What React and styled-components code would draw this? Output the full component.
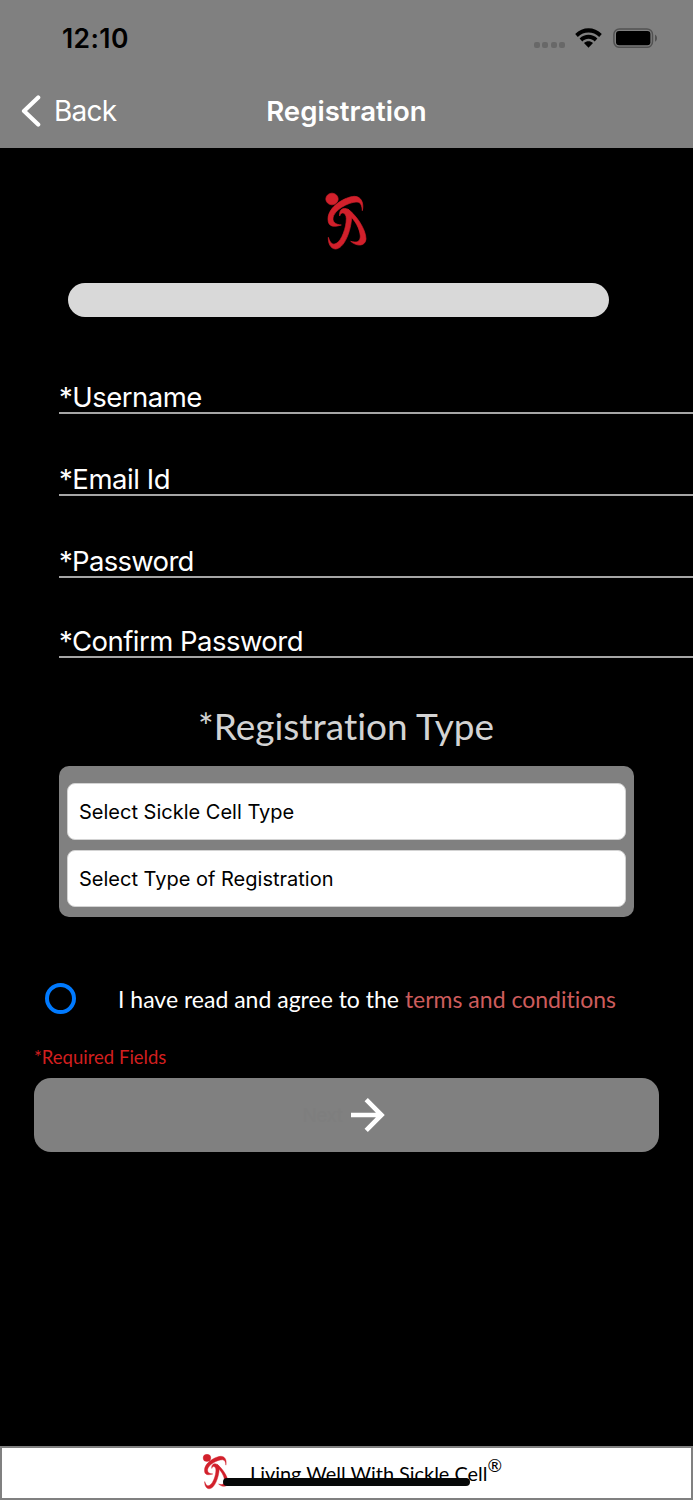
import React from 'react';
import styled, { createGlobalStyle } from 'styled-components';

const fields = [
  { label: '*Username', spacing: '-0.5px', height: 82 },
  { label: '*Email Id', spacing: '-0.45px', height: 82 },
  { label: '*Password', spacing: '-0.7px', height: 82 },
  { label: '*Confirm Password', spacing: '-0.53px', height: 80 },
];

const selects = ['Select Sickle Cell Type', 'Select Type of Registration'];

const Logo = ({ width, height }) => (
  <svg width={width} height={height} viewBox="72 33 135 180" fill="#d2202b" stroke="#d2202b" strokeWidth="2" strokeLinejoin="round" preserveAspectRatio="none">
    <ellipse cx="96" cy="57" rx="18.5" ry="17.5" />
    <path d="M187 92C192 71 185 49 163 49C137 50 84 79 84 117C84 143 104 141 124 135C106 133 98 127 99 114C101 92 143 66 171 66C183 67 186 78 187 92Z" />
    <path d="M119 108C117 90 127 83 139 86C150 90 155 97 155 112C153 152 133 207 106 207C91 206 84 189 85 172C91 191 99 196 109 190C125 182 139 142 139 116C139 97 123 93 119 108Z" />
    <path d="M143 87C165 101 198 146 198 177C196 200 170 200 152 184C170 189 181 186 181 168C179 144 164 120 149 107Z" />
  </svg>
);

const App = () => {
  return (
    <Screen>
      <GlobalStyle />
      <StatusBar>
        <Time>12:10</Time>
        <StatusIcons>
          <Signal><i /><i /><i /><i /></Signal>
          <svg width="27" height="20" viewBox="0 0 27 20" fill="#000">
            <path d="M0.2 6.1C7.6 -1.7 19.4 -1.7 26.8 6.1L24.2 8.9C18.2 3 8.8 3 2.8 8.9Z" />
            <path d="M4.6 10.6C9.5 5.6 17.5 5.6 22.4 10.6L19.7 13.4C16.4 10 10.6 10 7.3 13.4Z" />
            <path d="M9 15.1C11.5 12.5 15.5 12.5 18 15.1L13.5 19.8Z" />
          </svg>
          <svg width="45" height="20" viewBox="0 0 45 20">
            <rect x="0.9" y="0.9" width="38.6" height="18.4" rx="5.5" fill="none" stroke="#525252" strokeWidth="1.5" />
            <rect x="3" y="3" width="34.4" height="14.2" rx="3" fill="#000" />
            <path d="M42 6.5C44.7 8 44.7 12.2 42 13.7Z" fill="#525252" />
          </svg>
        </StatusIcons>
      </StatusBar>
      <NavBar>
        <BackButton>
          <svg width="20" height="32" viewBox="0 0 20 32" fill="none" stroke="#fff" strokeWidth="4.2" strokeLinecap="round" strokeLinejoin="round">
            <path d="M17.2 2.5L3 16L17.2 29.5" />
          </svg>
          <span>Back</span>
        </BackButton>
        <Title>Registration</Title>
      </NavBar>
      <Content>
        <LogoRow>
          <Logo width={45} height={60} />
        </LogoRow>
        <Progress />
        <Form>
          {fields.map(({ label, spacing, height }) => (
            <Field key={label} $spacing={spacing} $height={height}>{label}</Field>
          ))}
        </Form>
        <Heading>*Registration Type</Heading>
        <SelectGroup>
          {selects.map((text) => (
            <Select key={text}>{text}</Select>
          ))}
        </SelectGroup>
        <Terms>
          <Radio />
          <TermsText>I have read and agree to the <span>terms and conditions</span></TermsText>
        </Terms>
        <Required>*Required Fields</Required>
        <NextButton>
          <span>Next</span>
          <svg width="34" height="34" viewBox="0 0 34 34" fill="none" stroke="#fff" strokeWidth="4.6">
            <path d="M0 17H31M15.2 1.7L30.5 17L15.2 32.3" />
          </svg>
        </NextButton>
      </Content>
      <Footer>
        <Logo width={28} height={37} />
        <Brand>Living Well With Sickle Cell<sup>®</sup></Brand>
        <HomeIndicator />
      </Footer>
    </Screen>
  );
}

const GlobalStyle = createGlobalStyle`
  body {
    margin: 0;
    background: #000;
  }

  * {
    box-sizing: border-box;
  }

  svg {
    display: block;
    flex: none;
  }
`;

const Screen = styled.div`
  display: flex;
  flex-direction: column;
  width: 693px;
  height: 1500px;
  overflow: hidden;
  background: #000;
  color: #fff;
  font-family: Inter, "Liberation Sans", sans-serif;
  font-variant-ligatures: none;
  white-space: nowrap;
`;

const StatusBar = styled.div`
  display: flex;
  justify-content: space-between;
  height: 75px;
  padding: 22px 35px 0 62px;
  background: #808080;
  color: #000;
`;

const Time = styled.div`
  font-size: 26.5px;
  font-weight: 600;
  line-height: 33px;
  letter-spacing: 0.4px;
`;

const StatusIcons = styled.div`
  display: flex;
  align-items: flex-start;
  padding-top: 6px;

  svg + svg {
    margin-left: 11px;
  }
`;

const Signal = styled.div`
  display: flex;
  gap: 2.5px;
  padding: 14px 10px 0 0;

  i {
    width: 6px;
    height: 6px;
    border-radius: 2px;
    background: #686868;
  }
`;

const NavBar = styled.div`
  display: grid;
  grid-template-columns: 1fr auto 1fr;
  align-items: center;
  height: 72.5px;
  background: #808080;
`;

const BackButton = styled.div`
  display: flex;
  align-items: center;
  gap: 13.5px;
  padding-left: 20.5px;
  font-size: 28px;
  line-height: 34px;
  letter-spacing: -0.75px;
`;

const Title = styled.div`
  font-size: 27.6px;
  font-weight: 600;
  line-height: 34px;
`;

const Content = styled.div`
  flex: 1;
  display: flex;
  flex-direction: column;
`;

const LogoRow = styled.div`
  display: flex;
  justify-content: center;
  padding: 43.5px 0 0;
`;

const Progress = styled.div`
  height: 34px;
  margin: 32px 84px 0 68px;
  border-radius: 17px;
  background: #d9d9d9;
`;

const Form = styled.div`
  margin: 14.5px 0 0 59px;
`;

const Field = styled.div`
  display: flex;
  align-items: flex-end;
  height: ${({ $height }) => $height}px;
  border-bottom: 2px solid #a6a6a6;
  font-size: 27.5px;
  line-height: 29px;
  letter-spacing: ${({ $spacing }) => $spacing};
`;

const Heading = styled.div`
  margin: 44.5px 1px 0 0;
  color: #d3d3d3;
  font-family: Lato, sans-serif;
  font-size: 37px;
  line-height: 48px;
  text-align: center;
`;

const SelectGroup = styled.div`
  display: flex;
  flex-direction: column;
  gap: 10px;
  height: 151px;
  margin: 16px 59px 0;
  padding: 17px 8px 0;
  border-radius: 10px;
  background: #808080;
`;

const Select = styled.div`
  height: 57px;
  padding-left: 11px;
  border: 1px solid #d3d3d3;
  border-radius: 8px;
  background: #fff;
  color: #000;
  font-size: 20px;
  line-height: 56px;
`;

const Terms = styled.div`
  display: flex;
  align-items: center;
  height: 31px;
  margin: 66px 0 0 45px;
`;

const Radio = styled.div`
  width: 31px;
  height: 31px;
  margin-right: 42px;
  border: 4px solid #007aff;
  border-radius: 50%;
`;

const TermsText = styled.div`
  font-family: Lato, sans-serif;
  font-size: 23px;
  line-height: 32px;

  span {
    color: #cd5c5c;
  }
`;

const Required = styled.div`
  margin: 31px 0 0 34px;
  color: #d21f1f;
  font-family: Lato, sans-serif;
  font-size: 18.5px;
  line-height: 24px;
`;

const NextButton = styled.div`
  display: flex;
  align-items: center;
  justify-content: center;
  gap: 9px;
  height: 74px;
  margin: 9px 34px 0;
  padding-right: 5px;
  border-radius: 17px;
  background: #808080;
  color: #7e7e7e;
  font-size: 19px;
  letter-spacing: -0.5px;
`;

const Footer = styled.div`
  position: relative;
  display: flex;
  align-items: flex-start;
  height: 54px;
  padding: 5px 0 0 200px;
  border: 2px solid #808080;
  background: #fff;
  color: #000;
`;

const Brand = styled.div`
  margin-left: 20px;
  padding-top: 8px;
  font-family: Lato, sans-serif;
  font-size: 19.9px;
  line-height: 24px;

  sup {
    font-size: 17.5px;
    line-height: 0;
    vertical-align: 9px;
  }
`;

/* sits over the footer text, as on the device */
const HomeIndicator = styled.div`
  position: absolute;
  left: 221px;
  top: 30px;
  width: 247px;
  height: 8px;
  border-radius: 4px;
  background: #060808;
`;

export default App;
